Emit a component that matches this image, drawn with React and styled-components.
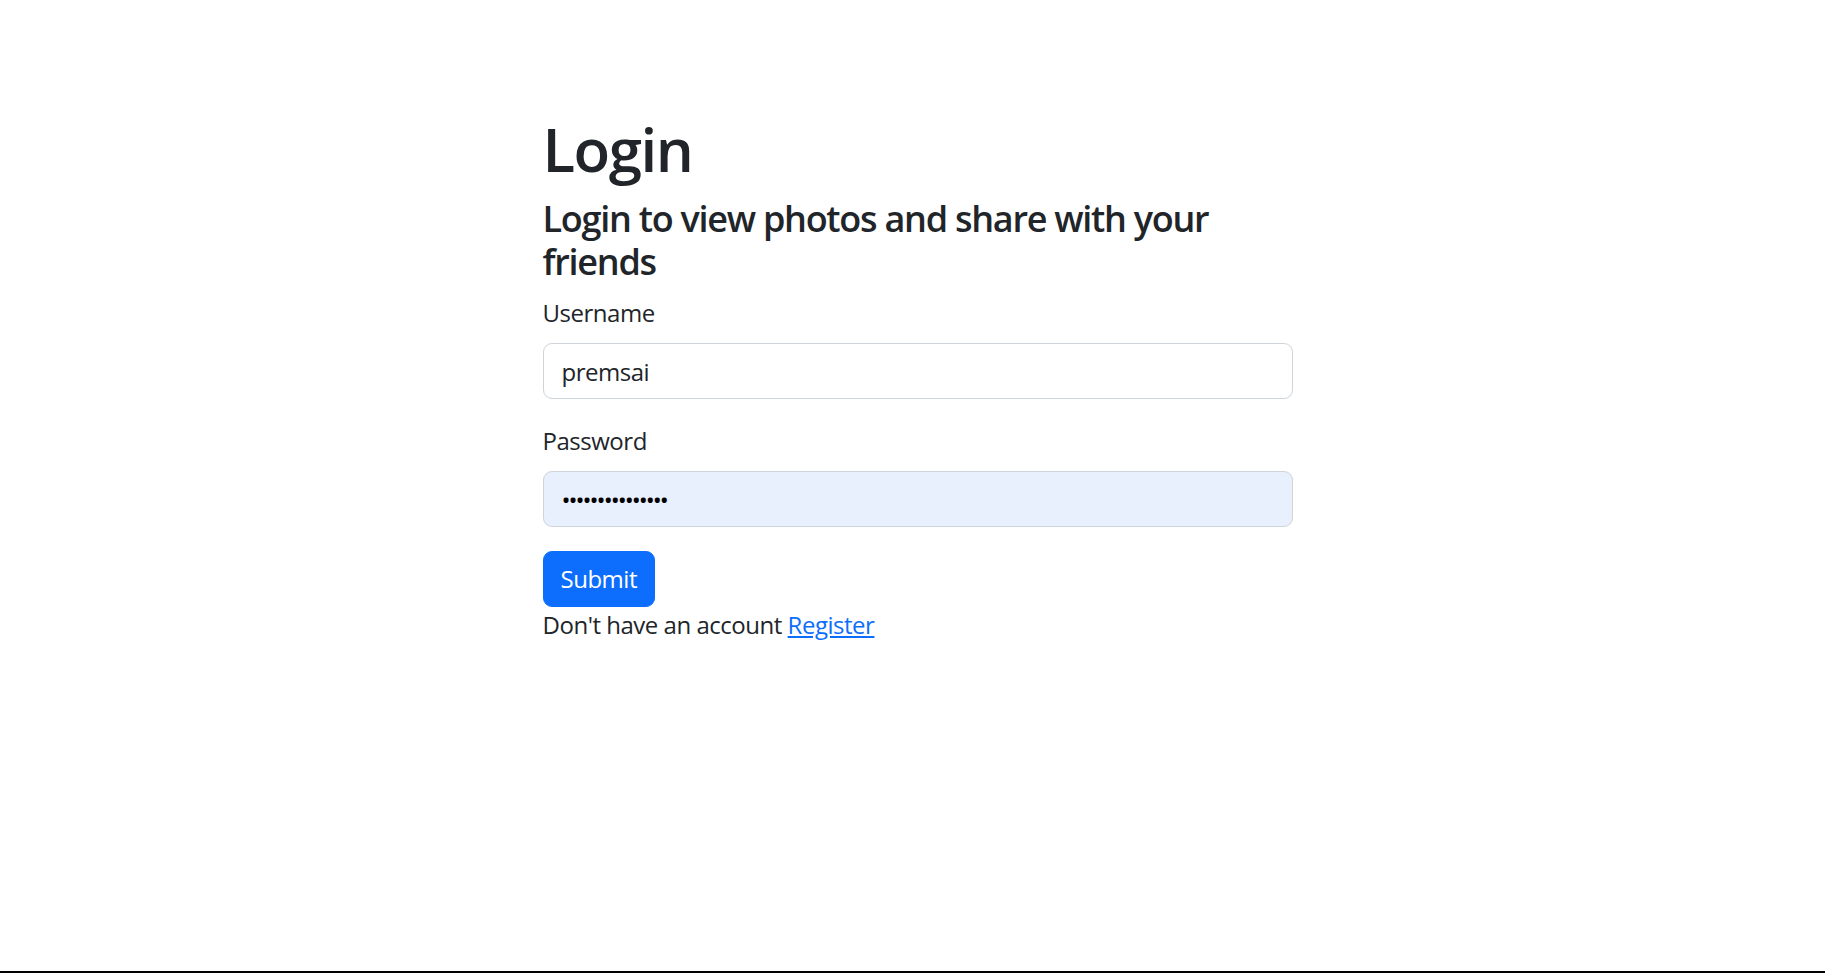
import React, { useState } from 'react'
import styled, { createGlobalStyle } from 'styled-components'

const GlobalStyle = createGlobalStyle`
    * {
        box-sizing: border-box;
    }
    body {
        margin: 0;
        background: #fff;
        color: #212529;
        font-family: "Open Sans", "Noto Sans", sans-serif;
        font-size: 24px;
        line-height: 1.5;
        letter-spacing: -0.02em;
    }
`

const Login = () => {
    const [values, setValues] = useState({ username: 'premsai', password: 'premsai@1234567' })

    const handleChange = (e) => {
        setValues({ ...values, [e.target.name]: e.target.value })
    }
    const handleSubmit = (e) => {
        e.preventDefault()
    }

    return (
        <Page>
            <GlobalStyle />
            <Wrapper>
                <form onSubmit={handleSubmit}>
                    <Title>Login</Title>
                    <Subtitle>Login to view photos and share with your friends</Subtitle>
                    <FormRow>
                        <Label htmlFor="username">Username</Label>
                        <Input id="username" name="username" type="text" value={values.username} onChange={handleChange} />
                    </FormRow>
                    <FormRow>
                        <Label htmlFor="password">Password</Label>
                        <Input id="password" name="password" type="password" $filled value={values.password} onChange={handleChange} />
                    </FormRow>
                    <SubmitButton type="submit">Submit</SubmitButton>
                    <Footnote>
                        Don't have an account <a href="#register">Register</a>
                    </Footnote>
                </form>
            </Wrapper>
            <BottomRule />
        </Page>
    )
}

const Page = styled.div`
    min-height: 973px;
    display: flex;
    flex-direction: column;
`

const Wrapper = styled.main`
    flex: 1;
    width: 750px;
    margin-left: calc(50% - 370px);
    padding-top: 113px;
`

const Title = styled.h1`
    margin: 0 0 12px;
    font-size: 60px;
    font-weight: 600;
    line-height: 1.2;
    letter-spacing: -0.025em;
`

const Subtitle = styled.h4`
    margin: 0 0 12px;
    font-size: 36px;
    font-weight: 600;
    line-height: 1.2;
    letter-spacing: -0.035em;
`

const FormRow = styled.div`
    margin-bottom: 24px;
`

const Label = styled.label`
    display: inline-block;
    margin-bottom: 12px;
`

const Input = styled.input`
    display: block;
    width: 100%;
    height: 56px;
    padding: 9px 18px;
    border: 1px solid #ced4da;
    border-radius: 9px;
    background: ${(p) => (p.$filled ? '#e8f0fe' : '#fff')};
    color: ${(p) => (p.$filled ? '#000' : '#212529')};
    font-family: inherit;
    font-size: 24px;
    line-height: 1.5;
    letter-spacing: ${(p) => (p.$filled ? '-2px' : '-0.02em')};
    &:focus {
        outline: none;
    }
`

const SubmitButton = styled.button`
    display: inline-block;
    height: 56px;
    padding: 9px 17px;
    border: 1px solid #0d6efd;
    border-radius: 9px;
    background: #0d6efd;
    color: #fff;
    font-family: inherit;
    font-size: 24px;
    line-height: 1.5;
    letter-spacing: -0.02em;
    cursor: pointer;
`

const Footnote = styled.div`
    a {
        color: #0d6efd;
        text-decoration: underline;
    }
`

const BottomRule = styled.div`
    height: 2px;
    background: #000;
`

export default Login
